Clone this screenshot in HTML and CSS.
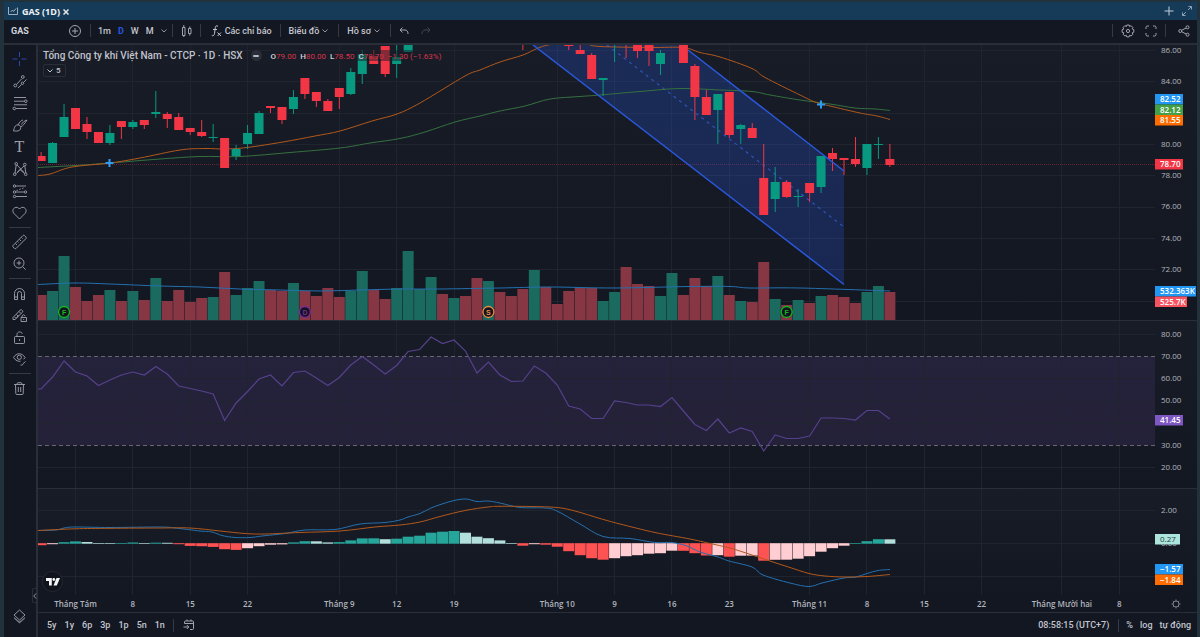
FILE: index.html
```html
<!DOCTYPE html>
<html lang="vi">
<head>
<meta charset="utf-8">
<title>GAS (1D)</title>
<link rel="stylesheet" href="styles.css">
</head>
<body>
<div class="app">
  <header class="tabbar">
    <div class="tab">
      <svg class="tab-icon" width="10" height="8" viewBox="0 0 10 8"><path d="M.5 0v7.500h9V.5M2.500 5l2-2 1 1.500L8 1.500"/></svg>
      <span class="tab-title">GAS (1D)</span>
      <button class="tab-close" aria-label="Đóng"><svg width="6" height="6" viewBox="0 0 6 6"><path d="M.5.5l5 5M5.500.5l-5 5"/></svg></button>
    </div>
    <div class="tab-actions">
      <button class="tab-add" aria-label="Thêm"><svg width="10" height="10" viewBox="0 0 10 10"><path d="M5 .5v9M.5 5h9"/></svg></button>
      <button class="tab-expand" aria-label="Mở rộng"><svg width="10" height="10" viewBox="0 0 10 10"><path d="M6 4l3.500-3.500M6.500.5h3v3M4 6L.5 9.500M.5 6.500v3h3"/></svg></button>
    </div>
  </header>

  <div class="toolbar">
    <button class="symbol">GAS</button>
    <button class="tb-icon" aria-label="So sánh"><svg width="14" height="14" viewBox="0 0 14 14"><circle cx="7" cy="7" r="5.500"/><path d="M7 4v6M4 7h6"/></svg></button>
    <i class="vsep sep-a"></i>
    <div class="intervals">
      <button>1m</button><button class="active">D</button><button>W</button><button>M</button>
      <button class="chev" aria-label="Khoảng thời gian"><svg width="6" height="4" viewBox="0 0 6 4"><path d="M.5.5L3 3 5.500.5"/></svg></button>
    </div>
    <i class="vsep"></i>
    <button class="tb-icon candle-btn" aria-label="Kiểu biểu đồ"><svg width="12" height="14" viewBox="0 0 12 14"><path d="M1.500 3.500h2.500v8H1.500zM2.800 1v2.500M2.800 11.500V13M7.500 4.500H10v5H7.500zM8.800 2.500v2M8.800 9.500v2"/></svg></button>
    <i class="vsep"></i>
    <button class="menu fx"><svg width="11" height="14" viewBox="0 0 11 14"><path d="M7 2.300C5.500 1.200 4.500 2 4.300 3.500L3.500 9.500C3.300 11.500 2 12.300.8 11.500M2 5.500h4M6.500 8.500l3.500 3.500M10 8.500L6.500 12"/></svg>Các chỉ báo</button>
    <i class="vsep"></i>
    <button class="menu">Biểu đồ<svg width="6" height="4" viewBox="0 0 6 4"><path d="M.5.5L3 3 5.500.5"/></svg></button>
    <i class="vsep"></i>
    <button class="menu">Hồ sơ<svg width="6" height="4" viewBox="0 0 6 4"><path d="M.5.5L3 3 5.500.5"/></svg></button>
    <i class="vsep"></i>
    <button class="tb-icon undo" aria-label="Hoàn tác"><svg width="10" height="8" viewBox="0 0 10 8"><path d="M3.500.5L1 3l2.500 2.500M1 3h5c2 0 3 1.500 3 4"/></svg></button>
    <button class="tb-icon redo" aria-label="Làm lại"><svg width="10" height="8" viewBox="0 0 10 8"><path d="M6.500.5L9 3 6.500 5.500M9 3H4C2 3 1 4.500 1 7"/></svg></button>
    <div class="tb-right">
      <i class="vsep"></i>
      <button class="tb-icon" aria-label="Cài đặt"><svg width="14" height="14" viewBox="0 0 14 14"><circle cx="7" cy="7" r="1.600"/><path d="M5.800 1h2.400l.4 1.500 1.500-.8 1.700 1.700-.7 1.500 1.700.7v2.600l-1.600.6.6 1.500-1.700 1.700-1.500-.7-.5 1.600H5.800l-.5-1.600-1.500.7-1.700-1.700.7-1.500-1.700-.5V5.700l1.700-.6-.8-1.600 1.800-1.800 1.500.8z"/></svg></button>
      <button class="tb-icon" aria-label="Toàn màn hình"><svg width="12" height="12" viewBox="0 0 12 12"><path d="M1 4V2.500Q1 1 2.500 1H4M8 1h1.500Q11 1 11 2.500V4M11 8v1.500Q11 11 9.500 11H8M4 11H2.500Q1 11 1 9.500V8"/></svg></button>
      <i class="vsep"></i>
      <button class="tb-icon share" aria-label="Chia sẻ"><svg width="12" height="12" viewBox="0 0 12 12"><circle cx="2.300" cy="6" r="1.500"/><circle cx="9.500" cy="2.300" r="1.500"/><circle cx="9.500" cy="9.700" r="1.500"/><path d="M3.700 5.300l4.400-2.300M3.700 6.700l4.400 2.300"/></svg></button>
    </div>
  </div>

  <main class="workspace">
    <nav class="tools" aria-label="Công cụ vẽ">
      <button class="active" aria-label="Con trỏ"><svg viewBox="0 0 16 16"><path d="M7.500 1v5M7.500 10v5M.5 8h5M9.500 8h5"/></svg></button>
      <button aria-label="Đường xu hướng"><svg viewBox="0 0 16 16"><path d="M4.500 11.500l5-5.500M6 15l3.500-3.500M11.500 9.500l3-3"/><circle cx="10.800" cy="4" r="1.400"/><circle cx="3.300" cy="12.500" r="1.400"/><circle cx="10.500" cy="10.300" r="1.200"/></svg></button>
      <button aria-label="Fibonacci"><svg viewBox="0 0 16 16"><path d="M2 2.500h12M2 6.200h10.500M2 9.800h13M4 13.500h11"/><circle cx="13.800" cy="6.200" r="1.300"/><circle cx="2.300" cy="13.500" r="1.300"/></svg></button>
      <button aria-label="Cọ vẽ"><svg viewBox="0 0 16 16"><path d="M1 13.500c1.500-.5 1-3 2.300-4.500s4-1.500 5 .2S8.500 13.500 6 13.900 2 14 1 13.500zM6 8C7.500 5 9 3.500 11 3M8.700 9.800c2.500-1 3.800-3 6.300-6.800M9.500 7.500c1-2 2.500-3.500 5.500-4.500"/></svg></button>
      <button aria-label="Văn bản"><svg viewBox="0 0 16 16"><text x="7.500" y="13" class="tool-letter">T</text></svg></button>
      <button aria-label="Mẫu hình"><svg viewBox="0 0 16 16"><path d="M3 12L4.200 4M5 4l7 7.500M5 11.500L12 5M12.800 5l1 7M4.500 12.500L8 8.500l4.500 4"/><circle cx="4.200" cy="2.800" r="1.300"/><circle cx="12.800" cy="3.500" r="1.300"/><circle cx="2.700" cy="13.300" r="1.300"/><circle cx="13.700" cy="13.300" r="1.300"/></svg></button>
      <button aria-label="Dự báo"><svg viewBox="0 0 16 16"><path d="M4 3h10M4 9h8M4 13.500h11"/><path d="M4.500 7.500L13 4.500" stroke-dasharray="1.500 1.500"/><circle cx="2.500" cy="3" r="1.200"/><circle cx="2.500" cy="9" r="1.200"/><circle cx="13.500" cy="9" r="1.200"/><circle cx="2.500" cy="13.500" r="1.200"/></svg></button>
      <button aria-label="Biểu tượng"><svg viewBox="0 0 16 16"><path d="M7.500 14L1.800 8.300C-1 5 3 .5 6.500 3l1 1 1-1c3.500-2.500 7.500 2 4.700 5.300z"/></svg></button>
      <hr>
      <button aria-label="Đo"><svg viewBox="0 0 16 16"><path d="M1 11.500l10-10q.7-.5 1.400 0l1.600 1.600q.5.700 0 1.400l-10 10q-.7.500-1.400 0l-1.600-1.600q-.5-.7 0-1.400zM3.500 9.500l1.500 1.500M5.500 7.500L6.500 8.500M7.500 5.500L9 7M9.500 3.500l1 1"/></svg></button>
      <button aria-label="Phóng to"><svg viewBox="0 0 16 16"><circle cx="7" cy="7" r="5"/><path d="M7 4.700v4.600M4.700 7h4.600M10.700 10.700l3 3"/></svg></button>
      <hr>
      <button aria-label="Nam châm"><svg viewBox="0 0 16 16"><path d="M2.500 14.500V8.500a5 5 0 0 1 10 0v6h-3v-6a2 2 0 0 0-4 0v6zM2.500 12h3M9.500 12h3"/></svg></button>
      <button aria-label="Chế độ vẽ"><svg viewBox="0 0 16 16"><path d="M1 10.500l7.300-7.500q.7-.6 1.500 0l.7.700q.6.800 0 1.500L3 12.500H1zM2.500 9.800l1.500 1.500M7 4.500L9 6.500M4.500 7.500l1.500 1.500M6.500 8.500L4.500 11M9 10.500h5.500v4H9zM10 10.500V9q1.500-2.500 3.300 0M11.700 12v1"/></svg></button>
      <button aria-label="Khóa"><svg viewBox="0 0 16 16"><rect x="2.500" y="7.500" width="10" height="7" rx="1"/><path d="M5 7.500V5.500c0-3 4.500-3.500 5.300-.8M7.500 10v2"/></svg></button>
      <button aria-label="Ẩn"><svg viewBox="0 0 16 16"><path d="M1.500 6.500c3-5 8.500-5 11.500 0M1.500 6.500c2 3.200 5 4.200 7 3.700M13 6.500l-1.300 1.800"/><circle cx="7.300" cy="6.300" r="2.100"/><path d="M8.500 14c1 .3 2.500.2 2.500-1.200M11 12.700l2.500-2.200"/></svg></button>
      <hr>
      <button aria-label="Xóa"><svg viewBox="0 0 16 16"><path d="M2 4.500h11M3.500 4.500l.3 9q.1 1 1 1h5.400q.9 0 1-1l.3-9M5 4.500q0-1.800 1-1.800h3q1 0 1 1.800M6.300 7v5M8.700 7v5"/></svg></button>
      <button class="layers" aria-label="Cây đối tượng"><svg viewBox="0 0 16 16"><path d="M7.500 2L13 7l-5.500 5L2 7z"/><path class="solid" d="M2 9l5.500 4.500L13 9v1.500l-5.500 5L2 10.500z"/></svg></button>
    </nav>

    <section class="chart">
      <div class="panes">
        <div class="pane pane-price"><svg class="plot" id="price"></svg><svg class="axis" id="price-axis"></svg></div>
        <div class="pane pane-rsi"><svg class="plot" id="rsi"></svg><svg class="axis" id="rsi-axis"></svg></div>
        <div class="pane pane-macd"><svg class="plot" id="macd"></svg><svg class="axis" id="macd-axis"></svg></div>
        <div class="legend">
          <div class="legend-row">
            <span class="legend-title">Tổng Công ty khí Việt Nam - CTCP · 1D · HSX</span>
            <span class="legend-dot"></span>
            <span class="ohlc"><span><b>O</b>79.00</span><span><b>H</b>80.00</span><span><b>L</b>78.50</span><span><b>C</b>78.70</span><span>−1.30 (−1.63%)</span></span>
          </div>
          <button class="legend-count"><svg width="6" height="4" viewBox="0 0 6 4"><path d="M.5.5L3 3 5.500.5"/></svg>5</button>
        </div>
        <a class="logo" href="#" aria-label="TradingView"><svg width="14" height="10" viewBox="0 0 14 10"><path d="M0 1h5.800v7.500H3V4H0z"/><circle cx="7.800" cy="2.500" r="1.400"/><path d="M10.500 1H14l-3.200 7.500H7.500z"/></svg></a>
        <button class="collapse" aria-label="Thu gọn"><svg width="4" height="6" viewBox="0 0 4 6"><path d="M3 .5L.8 3 3 5.500"/></svg></button>
      </div>
      <div class="time-row">
        <svg class="time-axis" id="time"></svg>
        <button class="time-settings" aria-label="Cài đặt trục"><svg width="10" height="10" viewBox="0 0 10 10"><circle cx="5" cy="5" r="3"/><path d="M5 .5V2M5 8v1.500M.5 5H2M8 5h1.500M1.800 1.800l1 1M7.200 7.200l1 1M8.200 1.800l-1 1M2.800 7.200l-1 1"/></svg></button>
      </div>
      <footer class="bottombar">
        <div class="ranges"><button>5y</button><button>1y</button><button>6p</button><button>3p</button><button>1p</button><button>5n</button><button>1n</button></div>
        <i class="vsep"></i>
        <button class="goto" aria-label="Đi đến ngày"><svg width="12" height="12" viewBox="0 0 12 12"><path d="M1.500 4.500V3q0-1 1-1h7q1 0 1 1v6.500q0 1-1 1H7M1.500 4.500h9M4 .5V2M8 .5V2M.5 8h5M3.800 6l2 2-2 2"/></svg></button>
        <div class="bottom-right">
          <button>08:58:15 (UTC+7)</button><i class="vsep"></i><button class="pct">%</button><button>log</button><button>tự động</button>
        </div>
      </footer>
    </section>
  </main>
</div>
<script src="chart.js"></script>
</body>
</html>
```
FILE: styles.css
```css
* { box-sizing: border-box; }
body { margin: 0; background: #21323d; font-family: Roboto, "Liberation Sans", sans-serif; color: #c3c6ce; }
button { margin: 0; padding: 0; border: 0; background: none; color: inherit; font: inherit; display: flex; align-items: center; }
svg { display: block; flex: none; fill: none; stroke: currentColor; stroke-width: 1; }
.app { display: flex; flex-direction: column; height: 100vh; padding: 2px 3px 0 4px; }

.tabbar { flex: none; height: 18px; display: flex; align-items: center; justify-content: space-between; background: #163b59; }
.tab { display: flex; align-items: center; padding-left: 4px; }
.tab-icon { color: #9fb0bd; }
.tab-title { margin-left: 4px; font: bold 9px "Open Sans", sans-serif; color: #f0f3f6; }
.tab-close { margin: 2px 0 0 3px; color: #e3e8ec; }
.tab-close svg { stroke-width: 1.500; }
.tab-actions { display: flex; align-items: center; padding-right: 5px; gap: 8px; }
.tab-add { color: #c3ced7; }
.tab-expand { color: #8ea1b0; }

.toolbar { flex: none; height: 25px; padding: 0 7px 2px 7px; display: flex; align-items: center; background: #131722; border-bottom: 2px solid #2a2e39; font-size: 9px; font-weight: 500; }
.vsep { flex: none; width: 1px; height: 13px; background: #363a45; }
.tb-icon { color: #a3a6af; }
.symbol { width: 57px; font-weight: 700; color: #d1d4dc; }
.sep-a { margin-left: 8px; }
.intervals { display: flex; align-items: center; gap: 7px; padding: 0 5px 0 7px; }
.intervals .active { color: #2558e0; font-weight: 700; }
.chev, .menu svg { color: #9194a0; }
.candle-btn { padding: 0 7px 0 8px; }
.menu { gap: 3px; padding: 0 10px 0 8px; white-space: nowrap; }
.menu.fx { padding: 0 8px 0 10px; }
.menu.fx svg { color: #c3c6ce; }
.undo { padding-left: 8px; }
.redo { padding-left: 12px; color: #434752; }
.tb-right { margin-left: auto; display: flex; align-items: center; gap: 8px; }
.tb-right .vsep + .share { margin-left: 4px; }
.tb-right .tb-icon + .tb-icon { margin-left: 2px; }

.workspace { flex: 1; min-height: 0; display: flex; background: #131722; }
.tools { flex: none; width: 34px; border-right: 2px solid #2a2e39; padding: 3px 0 10px; display: flex; flex-direction: column; align-items: center; color: #a0a3ac; }
.tools button { flex: none; height: 22px; }
.tools svg { width: 16px; height: 16px; stroke-width: 0.900; }
.tools .active { color: #2c4fbd; }
.tools hr { flex: none; width: 22px; height: 1px; margin: 3px 0; border: 0; background: #363a45; }
.tools .layers { margin-top: auto; }
.tools .solid { fill: #777b86; stroke: none; }
.tool-letter { font: 16px "Liberation Serif", serif; text-anchor: middle; fill: #a0a3ac; stroke: none; }

.chart { flex: 1; min-width: 0; display: flex; flex-direction: column; }
.panes { flex: 1; min-height: 0; display: flex; flex-direction: column; position: relative; }
.pane { display: flex; min-height: 0; overflow: hidden; background: linear-gradient(#181c27, #131722); }
.pane + .pane { border-top: 1px solid #2a2e39; }
.pane-price { flex: 275 1 0; }
.pane-rsi { flex: 167 1 0; }
.pane-macd { flex: 106 1 0; }
.plot { flex: 1; min-width: 0; height: 100%; }
.axis { width: 42px; height: 100%; }

.grid { stroke: #20242f; }
.candle-up { fill: #089981; stroke: none; }
.candle-down { fill: #f23645; stroke: none; }
.vol-up { fill: #1b6a60; stroke: none; }
.vol-down { fill: #873643; stroke: none; }
.line { stroke-width: 1; }
.orange { stroke: #b2581b; }
.green { stroke: #35713f; }
.blue { stroke: #2470ae; }
.purple { stroke: #56418b; stroke-width: 1.200; }
.cross { stroke: #2f9cf4; stroke-width: 2; }
.last-price { stroke: #602634; stroke-dasharray: 1 1; }
.channel { fill: #2962ff; fill-opacity: 0.220; stroke: none; }
.channel-edge { stroke: #2b58dc; stroke-width: 1.500; }
.channel-mid { stroke: #3053b8; stroke-width: 1.200; stroke-dasharray: 3 4; }
.band { fill: #7e57c2; fill-opacity: 0.140; stroke: none; }
.band-edge { stroke: #68676f; stroke-dasharray: 4 3; }
.hist-up { fill: #26a69a; stroke: none; }
.hist-up-weak { fill: #b2dfdb; stroke: none; }
.hist-down { fill: #ff5252; stroke: none; }
.hist-down-weak { fill: #ffcdd2; stroke: none; }
.event circle { fill: #10151d; stroke: currentColor; stroke-width: 1.300; }
.event text { font: bold 7px "Liberation Sans", sans-serif; text-anchor: middle; fill: currentColor; stroke: none; }
.event-f { color: #17b51f; }
.event-d { color: #7d2b9c; }
.event-s { color: #f08a45; }
.scale { font: 8px "Open Sans", sans-serif; fill: #b2b5be; stroke: none; }
.tag { stroke: none; }
.tag-text { font: 600 8px "Open Sans", sans-serif; fill: #fff; stroke: none; }
.tag-text.dark { fill: #26413f; font-weight: 400; }
.time-label { font: 600 8px "Open Sans", sans-serif; fill: #b2b5be; stroke: none; text-anchor: middle; }

.legend { position: absolute; left: 5px; top: 4px; }
.legend-row { display: flex; align-items: center; height: 13px; white-space: nowrap; }
.legend-title { font-size: 10px; font-weight: 500; color: #c0c3cb; }
.legend-dot { width: 11px; height: 11px; margin-left: 8px; border-radius: 50%; background: #2a2e39; display: flex; align-items: center; justify-content: center; }
.legend-dot::before { content: ""; width: 6px; height: 2px; border-radius: 1px; background: #b5b8c0; }
.ohlc { display: flex; gap: 4px; margin-left: 9px; padding-top: 2px; font-size: 8px; color: #d93547; background: rgba(24, 28, 39, 0.500); }
.ohlc b { font-weight: 500; color: #d1d4dc; }
.legend-count { height: 13px; margin-top: 2px; padding: 0 4px 0 3px; gap: 3px; border: 1px solid #2a2e39; border-radius: 2px; font-size: 8px; font-weight: 500; }
.logo { position: absolute; left: 4px; bottom: 3px; width: 21px; height: 21px; border-radius: 50%; border: 1px solid #252933; background: #10131c; display: flex; align-items: center; justify-content: center; }
.logo svg { fill: #f4f5f7; stroke: none; }
.collapse { position: absolute; left: -6px; bottom: -8px; width: 4px; height: 15px; background: #131722; border: 1px solid #2a2e39; border-right: 0; border-radius: 2px 0 0 2px; color: #8d909a; }

.time-row { flex: none; height: 17px; display: flex; align-items: center; }
.time-axis { flex: 1; min-width: 0; height: 17px; }
.time-settings { width: 42px; justify-content: center; color: #7d808b; }
.bottombar { flex: none; height: 25px; padding: 0 6px 0 9px; display: flex; align-items: center; border-top: 1px solid #2a2e39; font-size: 9px; font-weight: 500; }
.ranges { display: flex; gap: 8px; margin-right: 8px; }
.goto { margin-left: 9px; color: #a3a6af; }
.bottom-right { margin-left: auto; display: flex; align-items: center; gap: 7px; white-space: nowrap; }
.bottom-right .vsep { margin-left: 2px; }
```
FILE: chart.js
```js
// Origin of the shared canvas space in which all series are given.
const LEFT = 38;
const FIRST = 41.1;
const STEP = 11.47;
const barX = i => FIRST + i * STEP;

// Each bar: index, direction, body top, body bottom, high, low.
const candles = [
  [0,'d',156,161,152,161],[1,'u',143,163,142,163],[2,'u',117,137,104,137],[3,'d',108,129,108,129],
  [4,'d',124,132,117,139],[5,'d',132,143,132,143],[6,'u',133,143,125,145],[7,'d',121,127,121,139],
  [8,'u',122,127,120,129],[9,'d',120,125,120,129],[10,'u',112,114,91,118],[11,'d',114,119,112,128],
  [12,'d',117,130,113,130],[13,'d',128,132,128,135],[14,'d',132,136,120,137],[15,'u',137,138,124,142],
  [16,'d',138,168,138,168],[17,'u',149,156,145,160],[18,'u',133,144,125,149],[19,'u',113,134,111,134],
  [20,'d',106,108,106,113],[21,'d',107,120,107,124],[22,'u',97,109,90,114],[23,'d',78,94,78,99],
  [24,'d',92,101,92,107],[25,'d',101,111,99,111],[26,'d',88,97,88,109],[27,'u',72,94,68,95],
  [28,'u',54,74,50,84],[29,'d',56,64,50,64],[30,'d',46,74,46,77],[31,'u',57,64,45,78],[32,'u',45,52,45,52],
  [42,'d',44,45,45,50],[46,'d',44,46,45,50],[47,'d',50,54,45,54],[48,'d',55,79,53,79],[49,'u',78,80,78,96],
  [50,'u',44,45,45,62],[51,'d',44,45,45,58],[52,'d',45,51,45,58],[53,'d',45,51,45,66],[54,'u',53,64,50,75],
  [56,'d',45,63,45,63],[57,'d',66,97,64,120],[58,'d',97,115,90,115],[59,'u',94,110,94,144],[60,'d',92,135,92,138],
  [61,'u',125,129,124,144],[62,'d',128,138,123,138],[63,'d',178,215,144,215],[64,'u',182,199,167,212],
  [65,'d',182,197,180,198],[66,'u',196,197,189,207],[67,'d',183,193,183,202],[68,'u',156,187,156,193],
  [69,'d',153,159,148,171],[70,'d',158,160,158,175],[71,'d',159,164,137,167],[72,'u',144,168,144,175],
  [73,'u',144,145,137,159],[74,'d',159,165,144,167]
];
const volumes = 'd295 u291 u256 d287 d301 d295 u290 d301 u291 d300 u278 d301 d290 d302 d298 u297 d272 u295 u288 u281 d290 d291 u283 d291 d296 d288 d297 u291 u271 d290 d299 u288 u251 u289 u277 d294 u298 d296 d278 u281 d292 d296 d289 u270 d287 d304 d291 d288 d288 u301 u292 d267 d284 d286 u296 u273 d295 d278 d286 u276 d295 u301 d302 d262 u299 d305 u300 d303 u296 d295 d297 d303 u292 u286 d292'.split(' ');
const rsi = [389,377,361,372,376,385.5,380,375,372,375,366.5,374,386,388.5,391,394,420.5,403,391.5,379,375,386,372.5,371,378,385.5,377.5,365,356.5,365,374,365.5,351.5,349.5,337,343.5,340,351,373,362,375,381.5,381,366,373,385,406,409,418.5,418.5,401,402.5,405,405,406.5,397.5,411,424.5,430.5,419,433,428,431.5,451,435,438.5,438.5,436,418,418,418.5,420,410.5,410.5,419];
const hist = [-2,-1,1.5,2.3,1.7,.5,.4,.5,1.2,.5,1,.9,-1,-2.7,-3,-3.7,-6,-6.7,-5,-3,-1.5,-1.2,1.3,2.5,2.4,1.3,1.6,3.3,5.3,5.4,4.5,5,7,8,11,12,12.7,11,7,5.5,3.3,.5,-2.5,-1,-1.5,-3.5,-8,-12,-15,-16.5,-15,-13,-12,-10.5,-10,-7.5,-7.6,-10,-12.3,-12,-13.5,-12.5,-12.4,-17.5,-16.6,-16.5,-15.5,-13,-8.5,-5,-2.5,.5,2.5,4.5,4.4];

const volAvg = [[38,284.5],[75,283],[110,284],[160,286],[200,287],[240,289],[280,290],[320,291],[360,290],[400,289],[440,289],[500,288],[550,287],[615,288],[690,286.5],[730,286.5],[750,288],[800,288],[890,291]];
const fastAvg = [[38,175.5],[50,174],[72,167],[110,163],[140,158],[180,150],[205,148.5],[225,149],[247,147.5],[283,142],[315,136],[340,131],[372,121],[397,114],[420,103],[465,76],[480,70],[500,62],[523,55],[537,48.5],[548,45],[560,44],[585,44],[600,46.5],[650,47.5],[683,47.5],[700,52.5],[720,57],[752,68.5],[765,77.5],[800,95],[815,102],[830,106],[860,113],[877,116],[890,119.5]];
const slowAvg = [[38,167.5],[75,165.5],[110,163],[160,159],[200,156.5],[240,156.5],[290,152.5],[340,148],[370,143],[400,138.5],[425,132],[455,122],[480,116],[500,111],[525,106],[550,99],[580,96.5],[600,95],[640,91.5],[680,88.5],[720,90],[752,91.5],[770,95],[800,100],[830,104],[855,108],[875,109],[890,110.5]];
const macdLine = [[38,530.5],[56,530],[64,528],[75,527],[110,527.5],[160,527],[175,528],[200,531],[212,532],[222,535.5],[235,537.5],[250,537.5],[262,536],[285,533.5],[305,530],[335,529.5],[360,524],[385,522.5],[400,520],[408,517],[420,513.5],[431,508],[442,504],[454,500.5],[466,499],[477,501.5],[488,501],[500,503],[520,507.5],[545,508],[557,511],[580,524],[603,536.5],[630,538.5],[655,542.5],[672,542.5],[687,546],[700,552],[718,557],[729,561],[752,567],[763,575],[790,583],[809,586.5],[822,583],[844,578],[856,577],[867,573.5],[878,570.5],[890,569.5]];
const signalLine = [[38,530.5],[75,528.8],[110,528.3],[160,528],[190,528],[220,531],[245,533.5],[265,534],[300,532.5],[340,531],[375,527],[400,525],[420,522],[440,516.5],[465,510.5],[488,507],[500,506.3],[530,506.5],[557,507.5],[575,511],[600,518.5],[620,524],[655,532.5],[690,539],[710,543.5],[730,548],[752,555],[770,561],[790,567.5],[809,573.5],[825,576],[845,577],[867,576.5],[890,574.5]];

const dates = [[3,'Tháng Tám'],[8,'8'],[13,'15'],[18,'22'],[26,'Tháng 9'],[31,'12'],[36,'19'],[45,'Tháng 10'],[50,'9'],[55,'16'],[60,'23'],[67,'Tháng 11'],[72,'8'],[77,'15'],[82,'22'],[89,'Tháng Mười hai'],[94,'8']];

const rect = (cls, x, y, w, h) => `<rect class="${cls}" x="${x}" y="${y}" width="${w}" height="${h}"/>`;
const seg = (cls, x1, y1, x2, y2) => `<path class="${cls}" d="M${x1} ${y1}L${x2} ${y2}"/>`;
const poly = (cls, pts) => `<polyline class="line ${cls}" points="${pts.map(p => p.join()).join(' ')}"/>`;

// Catmull-Rom spline through the given points.
function curve(cls, p) {
  let d = `M${p[0]}`;
  for (let i = 0; i < p.length - 1; i++) {
    const a = p[i - 1] || p[i], b = p[i], c = p[i + 1], e = p[i + 2] || c;
    d += `C${b[0] + (c[0] - a[0]) / 6},${b[1] + (c[1] - a[1]) / 6} ${c[0] - (e[0] - b[0]) / 6},${c[1] - (e[1] - b[1]) / 6} ${c}`;
  }
  return `<path class="line ${cls}" d="${d}"/>`;
}
function draw(id, left, top, body) {
  document.getElementById(id).innerHTML = `<g transform="translate(${-left} ${-top})">${body}</g>`;
}
const verticals = (top, bottom) => dates.map(([i]) => seg('grid', Math.floor(barX(i)) + 0.5, top, Math.floor(barX(i)) + 0.5, bottom)).join('');
const horizontals = ys => ys.map(y => seg('grid', LEFT, y, 4000, y)).join('');

function drawPrice() {
  let s = verticals(45, 320) + horizontals([50.5, 81.5, 113.5, 144.5, 175.5, 207.5, 238.5, 269.5, 301.5]);
  volumes.forEach((v, i) => {
    const top = +v.slice(1);
    s += rect(v[0] === 'u' ? 'vol-up' : 'vol-down', barX(i) - 5.5, top, 11, 320 - top);
  });
  s += curve('blue', volAvg);
  s += seg('last-price', LEFT, 164.5, 4000, 164.5);
  s += '<polygon class="channel" points="533,45 681,45 844,171 844,284.5"/>';
  s += seg('channel-mid', 607, 45, 844, 227);
  s += curve('green', slowAvg) + curve('orange', fastAvg);
  candles.forEach(([i, dir, a, b, hi, lo]) => {
    const cls = dir === 'u' ? 'candle-up' : 'candle-down', x = barX(i);
    s += rect(cls, x - 0.5, hi, 1, lo - hi) + rect(cls, x - 4.5, a, 9, b - a);
  });
  s += seg('channel-edge', 533, 45, 844, 284.5) + seg('channel-edge', 688, 50, 844, 171);
  for (const [x, y] of [[109.5, 163], [821, 104.5]]) s += seg('cross', x - 4, y, x + 4, y) + seg('cross', x, y - 4, x, y + 4);
  for (const [i, k] of [[2, 'F'], [23, 'D'], [39, 'S'], [65, 'F']]) {
    const x = barX(i);
    s += `<g class="event event-${k.toLowerCase()}"><circle cx="${x}" cy="312" r="5.5"/><text x="${x}" y="314.5">${k}</text></g>`;
  }
  draw('price', LEFT, 45, s);
}
function drawRsi() {
  draw('rsi', LEFT, 321,
    rect('band', LEFT, 356.5, 4000, 89) + verticals(321, 488) + horizontals([334.5, 378.5, 401.5, 423.5, 467.5]) +
    seg('band-edge', LEFT, 356.5, 4000, 356.5) + seg('band-edge', LEFT, 445.5, 4000, 445.5) +
    poly('purple', [[38, 389], ...rsi.map((y, i) => [barX(i), y])]));
}
function drawMacd() {
  let s = verticals(489, 595) + horizontals([510.5, 543.5, 576.5]);
  hist.forEach((v, i) => {
    const prev = i ? hist[i - 1] : 0;
    const cls = v > 0 ? (v >= prev ? 'hist-up' : 'hist-up-weak') : (v <= prev ? 'hist-down' : 'hist-down-weak');
    s += rect(cls, barX(i) - 5.5, v > 0 ? 543.7 - v : 543.2, 11, Math.max(Math.abs(v), 0.7));
  });
  draw('macd', LEFT, 489, s + curve('blue', macdLine) + curve('orange', signalLine));
}
function drawAxis(id, top, labels, tags) {
  let s = labels.map(([y, t]) => `<text class="scale" x="6" y="${y + 3}">${t}</text>`).join('');
  for (const [y, t, w, color, dark] of tags) {
    s += `<rect class="tag" x="0" y="${y}" width="${w}" height="10.5" fill="${color}"/><text class="tag-text ${dark ? 'dark' : ''}" x="5" y="${y + 8}">${t}</text>`;
  }
  draw(id, 0, top, s);
}

drawPrice();
drawRsi();
drawMacd();
drawAxis('price-axis', 45, [[50,'86.00'],[81,'84.00'],[144,'80.00'],[175,'78.00'],[206,'76.00'],[238,'74.00'],[269,'72.00']], [
  [94,'82.52',28,'#2196f3'],[104.5,'82.12',28,'#43a047'],[115,'81.55',28,'#ff6d00'],
  [159,'78.70',28,'#f23645'],[286,'532.363K',41,'#2196f3'],[296.5,'525.7K',32,'#f7525f']]);
drawAxis('rsi-axis', 321, [[334,'80.00'],[356,'70.00'],[378,'60.00'],[400,'50.00'],[445,'30.00'],[467,'20.00']], [[415,'41.45',28,'#7e57c2']]);
drawAxis('macd-axis', 489, [[510,'2.00'],[543,'0.00']], [
  [534,'0.27',25,'#ace5dc',true],[564,'−1.57',28,'#2196f3'],[574.5,'−1.84',28,'#ff6d00']]);
draw('time', LEFT, 595, dates.map(([i, t]) => `<text class="time-label" x="${barX(i)}" y="606.5">${t}</text>`).join(''));
```
